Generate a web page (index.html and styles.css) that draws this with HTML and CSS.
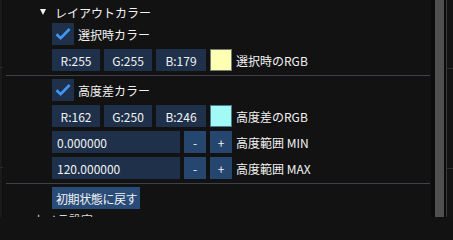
FILE: index.html
```html
<!DOCTYPE html>
<html lang="ja">
<head>
<meta charset="utf-8">
<title>レイアウトカラー</title>
<link rel="stylesheet" href="styles.css">
</head>
<body>
<div class="app">
  <div class="edge"><span class="tick tick-a"></span><span class="tick tick-b"></span></div>
  <div class="panel">
    <div class="tree-header"><span class="arrow"></span><span class="header-text">レイアウトカラー</span></div>
    <div class="rows">
      <div class="row">
        <span class="checkbox"><svg width="22" height="22" viewBox="0 0 22 22"><polyline points="4.5,11.2 8.6,15.2 17.6,6" fill="none" stroke="#4296fa" stroke-width="2.6" stroke-linecap="butt" stroke-linejoin="miter"/></svg></span>
        <span class="label">選択時カラー</span>
      </div>
      <div class="row">
        <span class="drag">R:255</span>
        <span class="drag">G:255</span>
        <span class="drag drag-last">B:179</span>
        <span class="swatch swatch-yellow"></span>
        <span class="label">選択時のRGB</span>
      </div>
    </div>
    <div class="sep"></div>
    <div class="rows">
      <div class="row">
        <span class="checkbox"><svg width="22" height="22" viewBox="0 0 22 22"><polyline points="4.5,11.2 8.6,15.2 17.6,6" fill="none" stroke="#4296fa" stroke-width="2.6" stroke-linecap="butt" stroke-linejoin="miter"/></svg></span>
        <span class="label">高度差カラー</span>
      </div>
      <div class="row">
        <span class="drag">R:162</span>
        <span class="drag">G:250</span>
        <span class="drag drag-last">B:246</span>
        <span class="swatch swatch-cyan"></span>
        <span class="label">高度差のRGB</span>
      </div>
      <div class="row">
        <span class="input">0.000000</span>
        <span class="step">-</span>
        <span class="step">+</span>
        <span class="label">高度範囲 MIN</span>
      </div>
      <div class="row">
        <span class="input">120.000000</span>
        <span class="step">-</span>
        <span class="step">+</span>
        <span class="label">高度範囲 MAX</span>
      </div>
    </div>
    <div class="sep"></div>
    <div class="rows">
      <div class="row">
        <span class="button">初期状態に戻す</span>
      </div>
    </div>
    <div class="next">カメラ設定</div>
  </div>
  <div class="gutter"></div>
  <div class="scrollbar"></div>
  <div class="gutter-thin"></div>
  <div class="vline"></div>
  <div class="side"><span class="tick side-a"></span><span class="tick side-b"></span></div>
</div>
</body>
</html>
```
FILE: styles.css
```css
html, body {
  margin: 0;
  padding: 0;
  background: #121212;
}
body {
  font-family: "Noto Sans CJK JP", "Noto Sans", sans-serif;
  font-size: 12px;
  color: #f2f2f2;
}
.app {
  display: flex;
  width: 453px;
  height: 217px;
  overflow: hidden;
  background: #121212;
}
.edge {
  width: 3px;
  flex: none;
  display: flex;
  flex-direction: column;
  background: linear-gradient(to right, #1b1b1b 0 2px, #0e0e0e 2px 3px);
}
.tick {
  display: block;
  height: 1px;
  flex: none;
  background: #2c2c2c;
}
.tick-a { margin-top: 67px; }
.tick-b { margin-top: 99px; }
.panel {
  width: 428px;
  flex: none;
  display: flex;
  flex-direction: column;
  overflow: hidden;
}
.panel > * {
  flex: none;
}
.tree-header {
  height: 22px;
  padding-top: 1px;
  padding-left: 37px;
  display: flex;
  align-items: center;
  gap: 9px;
}
.arrow {
  width: 0;
  height: 0;
  border-left: 3.5px solid transparent;
  border-right: 3.5px solid transparent;
  border-top: 6px solid #f2f2f2;
}
.rows {
  display: flex;
  flex-direction: column;
  gap: 4px;
  padding-left: 49px;
}
.row {
  display: flex;
  align-items: center;
  gap: 4px;
  height: 22px;
  flex: none;
}
.row > * {
  flex: none;
}
.checkbox {
  width: 22px;
  height: 22px;
  background: #1e304a;
  display: flex;
}
.label {
  white-space: nowrap;
}
.drag {
  width: 48px;
  height: 22px;
  background: #1e304a;
  display: flex;
  align-items: center;
  justify-content: center;
}
.drag-last {
  width: 50px;
}
.swatch {
  width: 22px;
  height: 22px;
  box-sizing: border-box;
  border: 1px solid rgba(20, 40, 70, 0.6);
}
.swatch-yellow { background-color: #ffffb3; }
.swatch-cyan { background-color: #a2faf6; }
.input {
  width: 128px;
  height: 22px;
  box-sizing: border-box;
  padding-left: 5px;
  background: #1e304a;
  display: flex;
  align-items: center;
}
.step {
  width: 22px;
  height: 22px;
  background: #25466e;
  display: flex;
  align-items: center;
  justify-content: center;
}
.button {
  height: 22px;
  padding: 0 3px 0 4px;
  background: #284b77;
  display: flex;
  align-items: center;
  letter-spacing: -0.4px;
}
.sep {
  height: 1px;
  background: #40404a;
  margin: 4px 1px 3px 3px;
}
.next {
  margin-top: 4px;
  padding-left: 30px;
  line-height: 14px;
  color: #d8d8d8;
}
.gutter {
  width: 4px;
  flex: none;
  background: #0c0c0c;
}
.scrollbar {
  width: 9px;
  flex: none;
  background: #4f4f4f;
}
.gutter-thin {
  width: 2px;
  flex: none;
  background: #0c0c0c;
}
.vline {
  width: 1px;
  flex: none;
  background: #383838;
}
.side {
  flex: 1;
  display: flex;
  flex-direction: column;
  background: #141414;
}
.side-a { margin-top: 68px; background: #2e2e2e; }
.side-b { margin-top: 99px; background: #2e2e2e; }
```
